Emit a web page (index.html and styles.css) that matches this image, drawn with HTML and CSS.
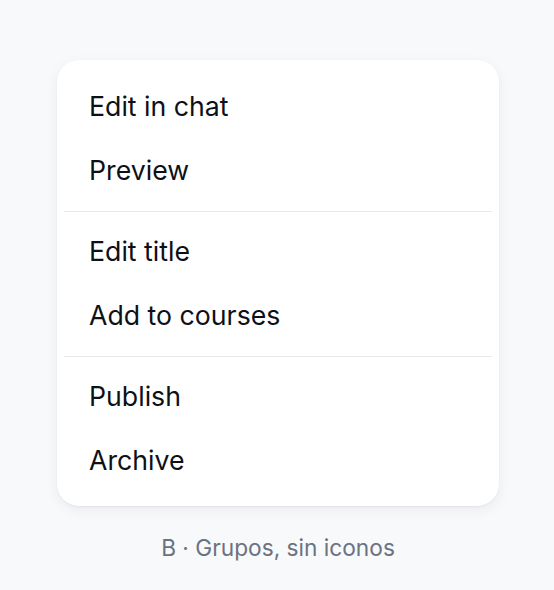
FILE: index.html
```html
<!DOCTYPE html>
<html lang="en">
<head>
    <meta charset="UTF-8">
    <meta name="viewport" content="width=device-width, initial-scale=1.0">
    <title>Menu - B</title>
    <link rel="stylesheet" href="styles.css">
</head>
<body>

    <div class="stage">
        <div class="menu">
            <div class="menu-group">
                <div class="menu-item">Edit in chat</div>
                <div class="menu-item">Preview</div>
            </div>
            <div class="menu-sep"></div>
            <div class="menu-group">
                <div class="menu-item">Edit title</div>
                <div class="menu-item">Add to courses</div>
            </div>
            <div class="menu-sep"></div>
            <div class="menu-group">
                <div class="menu-item">Publish</div>
                <div class="menu-item">Archive</div>
            </div>
        </div>

        <div class="caption">B · Grupos, sin iconos</div>
    </div>

</body>
</html>
```

FILE: styles.css
```css
body {
    margin: 0;
    background-color: #f8f9fb;
    font-family: Inter, "Noto Sans", sans-serif;
    color: #0d1117;
}

.stage {
    display: flex;
    flex-direction: column;
    align-items: center;
    padding-top: 60px;
    padding-left: 2px;
}

.menu {
    width: 442px;
    box-sizing: border-box;
    background-color: #fff;
    border-radius: 22px;
    padding: 15px 7px 14px;
    box-shadow: 0 1px 2px rgba(16, 24, 40, 0.05), 0 4px 14px rgba(16, 24, 40, 0.06);
}

.menu-item {
    font-size: 26.7px;
    line-height: 31.5px;
    padding: 16px 25px;
}

.menu-sep {
    height: 1px;
    background-color: #e8e9ec;
    margin: 9px 0 8px;
}

.caption {
    margin-top: 28px;
    font-size: 22.7px;
    color: #6b7280;
}
```
